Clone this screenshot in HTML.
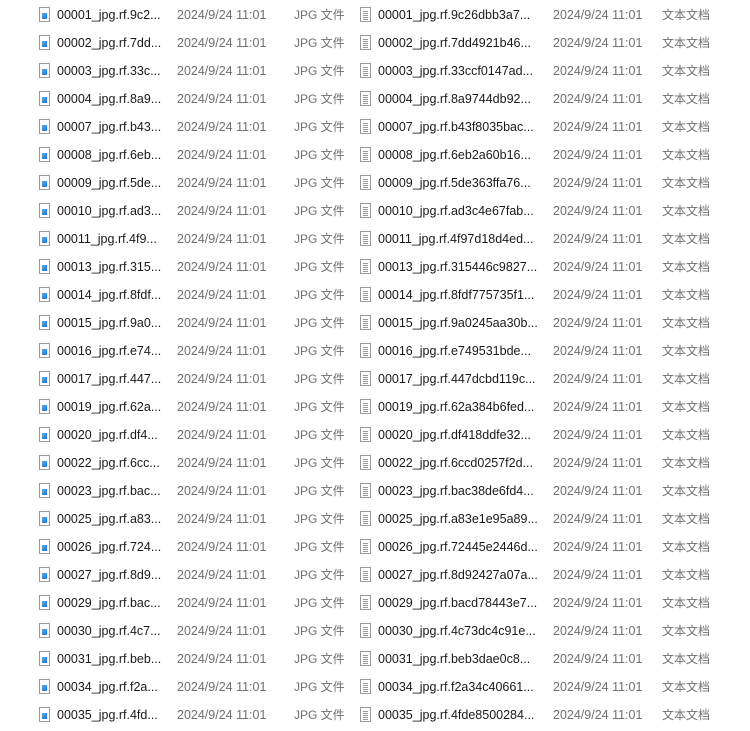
<!DOCTYPE html>
<html><head><meta charset="utf-8"><style>
body{margin:0;width:750px;height:731px;background:#fff;position:relative;overflow:hidden;font-family:"Liberation Sans","Noto Sans CJK SC",sans-serif;font-size:12.5px;}
.r{position:absolute;left:0;width:750px;height:20px;line-height:20px;white-space:nowrap}
.r span{position:absolute;top:0}
.n{color:#1a1a1a}
.d{color:#707070}
.c{font-size:12px}
.i{position:absolute;top:2px;width:11px;height:15px;border:1px solid #9a9a9a;background:#fff;box-sizing:border-box}
.i1 b{position:absolute;left:2px;top:5px;width:5px;height:6px;background:linear-gradient(135deg,#5ab0f0,#1a6fd0)}
.i2 b{position:absolute;left:2px;height:1px;width:5px;background:#9a9a9a}
</style></head><body>
<script>
const L=[["00001","9c2","9c26dbb3a7"],["00002","7dd","7dd4921b46"],["00003","33c","33ccf0147ad"],["00004","8a9","8a9744db92"],["00007","b43","b43f8035bac"],["00008","6eb","6eb2a60b16"],["00009","5de","5de363ffa76"],["00010","ad3","ad3c4e67fab"],["00011","4f9","4f97d18d4ed"],["00013","315","315446c9827"],["00014","8fdf","8fdf775735f1"],["00015","9a0","9a0245aa30b"],["00016","e74","e749531bde"],["00017","447","447dcbd119c"],["00019","62a","62a384b6fed"],["00020","df4","df418ddfe32"],["00022","6cc","6ccd0257f2d"],["00023","bac","bac38de6fd4"],["00025","a83","a83e1e95a89"],["00026","724","72445e2446d"],["00027","8d9","8d92427a07a"],["00029","bac","bacd78443e7"],["00030","4c7","4c73dc4c91e"],["00031","beb","beb3dae0c8"],["00034","f2a","f2a34c40661"],["00035","4fd","4fde8500284"]];
let h='';
L.forEach((e,k)=>{const y=5+k*28;
h+=`<div class="r" style="top:${y}px"><div class="i i1" style="left:39px"><b></b></div><span class="n" style="left:57px">${e[0]}_jpg.rf.${e[1]}...</span><span class="d" style="left:177px">2024/9/24 11:01</span><span class="d c" style="left:294px">JPG 文件</span><div class="i i2" style="left:360px"><b style="top:3px"></b><b style="top:5px"></b><b style="top:7px"></b><b style="top:9px"></b><b style="top:11px"></b></div><span class="n" style="left:378px">${e[0]}_jpg.rf.${e[2]}...</span><span class="d" style="left:553px">2024/9/24 11:01</span><span class="d c" style="left:662px">文本文档</span></div>`;});
document.write(h);
</script>
</body></html>
